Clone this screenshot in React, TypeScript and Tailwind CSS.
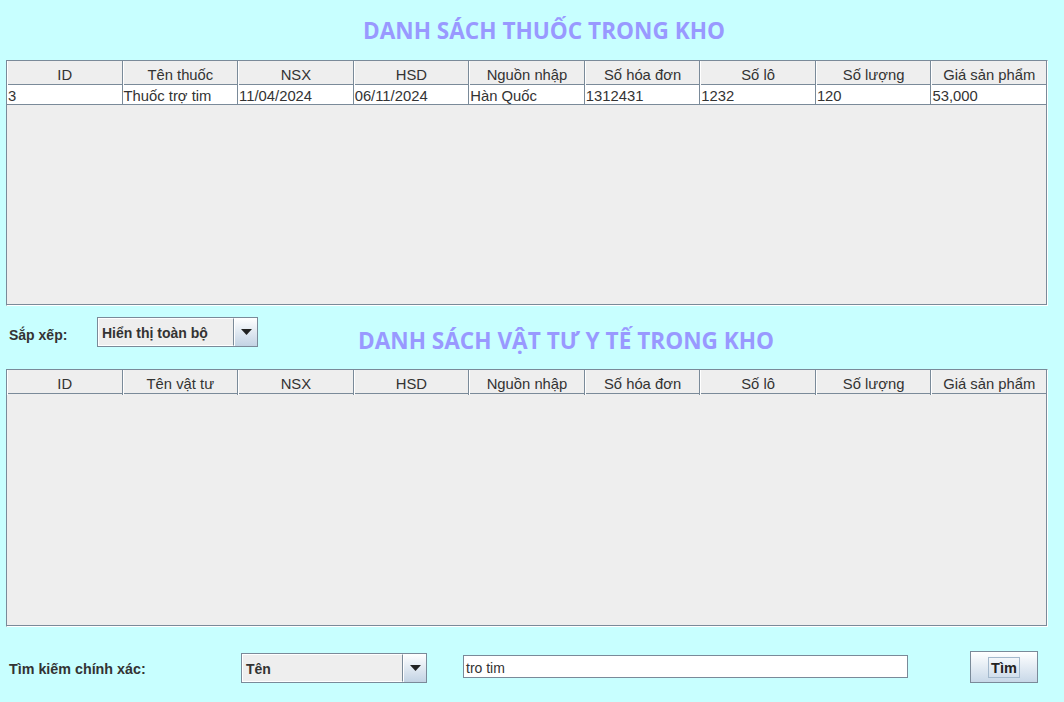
import React from 'react';

const drugCols = ['ID', 'Tên thuốc', 'NSX', 'HSD', 'Nguồn nhập', 'Số hóa đơn', 'Số lô', 'Số lượng', 'Giá sản phẩm'];
const supplyCols = ['ID', 'Tên vật tư', 'NSX', 'HSD', 'Nguồn nhập', 'Số hóa đơn', 'Số lô', 'Số lượng', 'Giá sản phẩm'];
const drugRows = [['3', 'Thuốc trợ tim', '11/04/2024', '06/11/2024', 'Hàn Quốc', '1312431', '1232', '120', '53,000']];

const Title: React.FC<{ children: React.ReactNode; className?: string }> = ({ children, className = '' }) => (
  <div
    className={`text-[22.6px] font-bold text-[#9999ff] leading-none ${className}`}
    style={{ fontFamily: '"Open Sans", "Noto Sans", sans-serif' }}
  >
    {children}
  </div>
);

const DataTable: React.FC<{ cols: string[]; rows: string[][]; height: string }> = ({ cols, rows, height }) => (
  <div className={`ml-[6px] w-[1042px] ${height} border border-[#7a8a99] border-r-white border-b-white bg-[#eeeeee] shadow-[inset_-1px_-1px_0_#7a8a99]`}>
    <div className="grid grid-cols-9 h-[24px] border-b border-[#7a8a99] bg-[#eeeeee]">
      {cols.map((c) => (
        <div
          key={c}
          className="flex items-center justify-center pt-[3px] border-r border-[#7a8a99] border-l border-l-white text-[14.8px] text-[#333333]"
        >
          {c}
        </div>
      ))}
    </div>
    {rows.map((r, i) => (
      <div key={i} className="grid grid-cols-9 h-[20px] border-b border-[#7a8a99] bg-white">
        {r.map((v, j) => (
          <div key={j} className="flex items-center pl-[1px] pt-[3px] border-r border-[#7a8a99] text-[14.8px] text-[#333333] leading-none">
            {v}
          </div>
        ))}
      </div>
    ))}
  </div>
);

const Combo: React.FC<{ value: string; width: string }> = ({ value, width }) => (
  <div className={`flex ${width} h-[30px] border border-[#7a8a99] bg-[#eeeeee]`}>
    <div className="flex-1 flex items-center pl-[3px] pt-[2px] border border-white border-r-[#7a8a99] text-[14px] font-bold text-[#333333]">
      {value}
    </div>
    <div className="w-[23px] flex items-center justify-center border-l border-white bg-gradient-to-b from-white to-[#c3d3e4]">
      <svg width="11" height="6" viewBox="0 0 11 6">
        <path d="M0 0 L11 0 L5.5 6 Z" fill="#222222" />
      </svg>
    </div>
  </div>
);

export default function App() {
  return (
    <div
      className="w-[1064px] h-[702px] bg-[#c8ffff] overflow-hidden"
      style={{ fontFamily: '"Liberation Sans", Arial, sans-serif' }}
    >
      <div className="h-[60px] flex items-center justify-center pl-[24px] pt-[3px]">
        <Title>DANH SÁCH THUỐC TRONG KHO</Title>
      </div>

      <DataTable cols={drugCols} rows={drugRows} height="h-[246px]" />

      <div className="h-[63px] flex items-start">
        <div className="w-[97px] pl-[9px] pt-[19px] text-[14px] font-bold text-[#333333]">Sắp xếp:</div>
        <div className="pt-[11px]">
          <Combo value="Hiển thị toàn bộ" width="w-[161px]" />
        </div>
        <Title className="ml-[100px] pt-[24px]">DANH SÁCH VẬT TƯ Y TẾ TRONG KHO</Title>
      </div>

      <DataTable cols={supplyCols} rows={[]} height="h-[258px]" />

      <div className="h-[75px] flex items-start">
        <div className="w-[241px] pl-[9px] pt-[32px] text-[14.3px] font-bold text-[#333333]">Tìm kiếm chính xác:</div>
        <div className="pt-[26px]">
          <Combo value="Tên" width="w-[186px]" />
        </div>
        <div className="pt-[28px] ml-[36px]">
          <div className="w-[445px] h-[23px] flex items-center pl-[2px] pt-[3px] bg-white border border-[#7a8a99] text-[14px] text-[#333333]">
            tro tim
          </div>
        </div>
        <div className="pt-[24px] ml-[62px]">
          <button className="w-[68px] h-[32px] flex items-center justify-center border border-[#7a8a99] bg-gradient-to-b from-white to-[#c8d8e8]">
            <span className="px-[2px] pt-[1px] border border-[#a3b8cc] text-[14.5px] font-bold text-[#222222] leading-[18px]">Tìm</span>
          </button>
        </div>
      </div>
    </div>
  );
}
